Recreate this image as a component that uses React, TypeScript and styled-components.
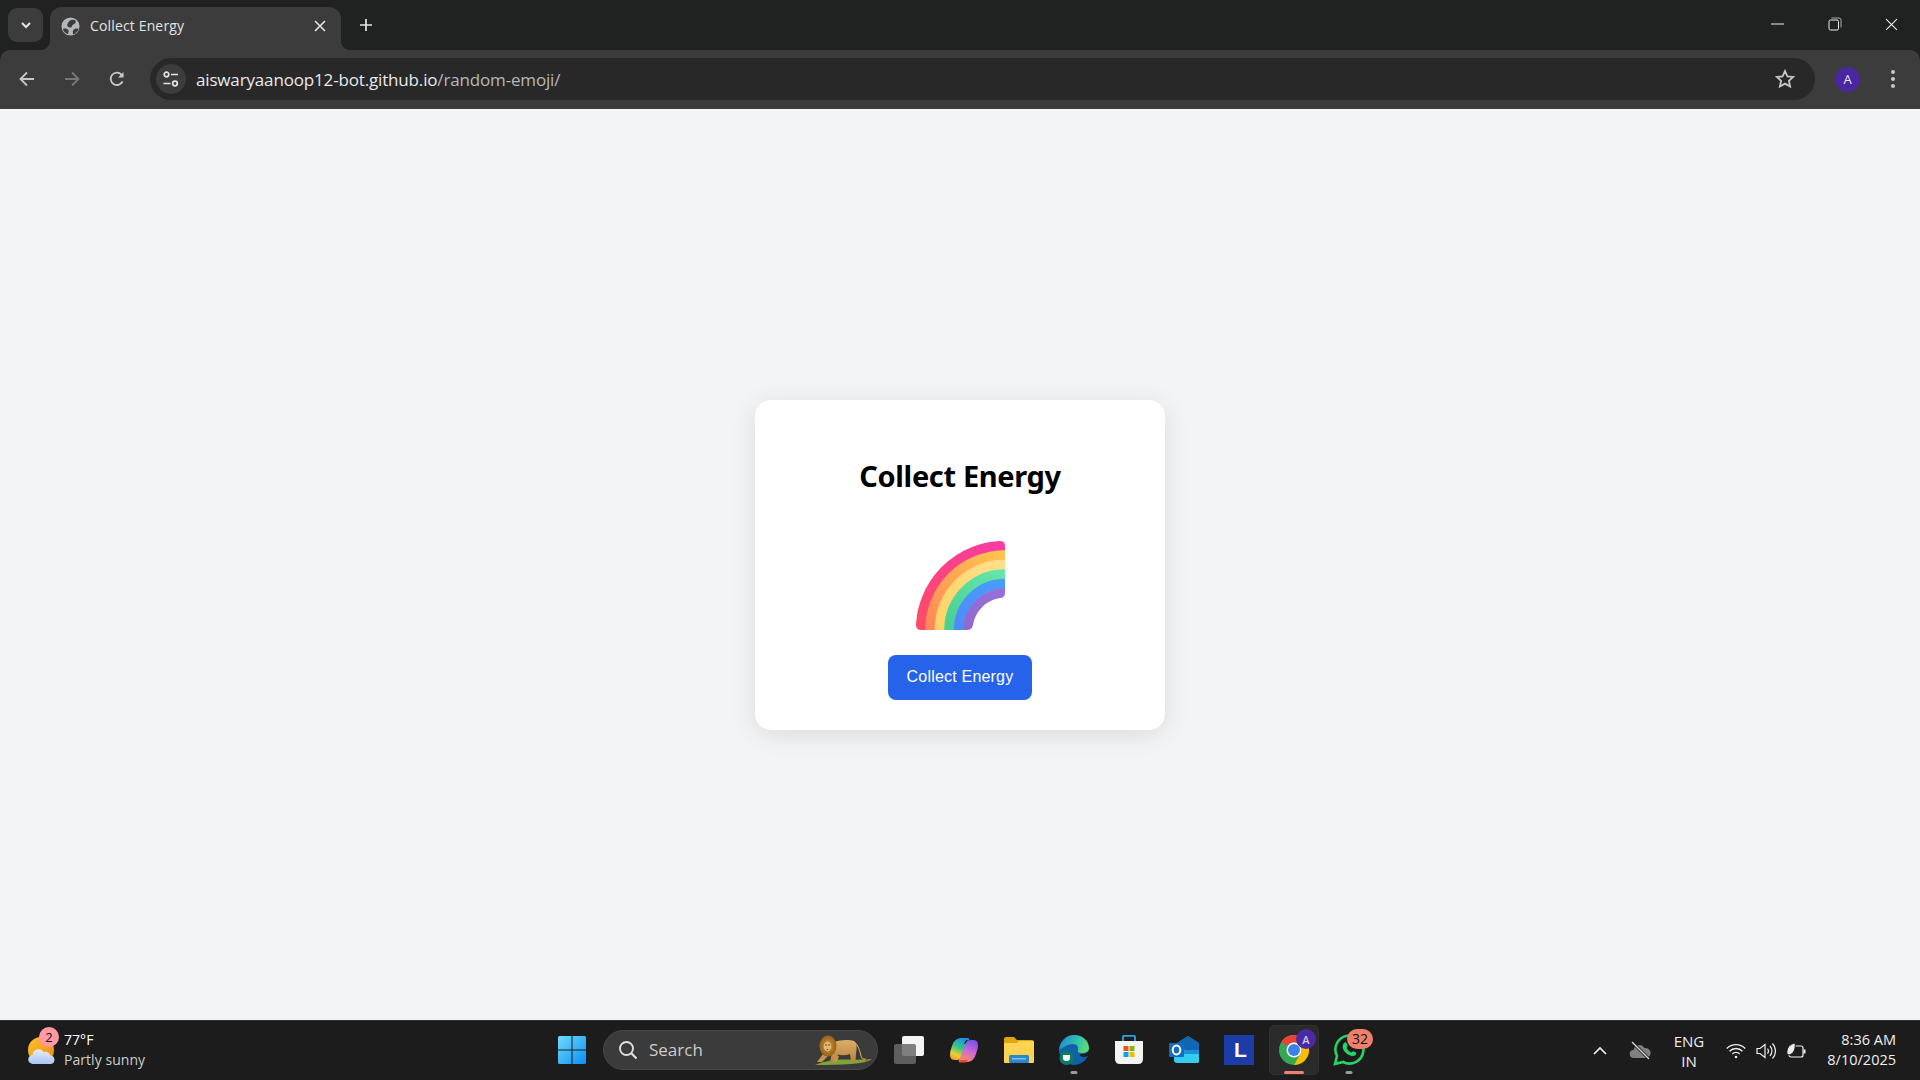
import React from "react";
import styled, { createGlobalStyle } from "styled-components";

const Global = createGlobalStyle`
  html, body { margin: 0; padding: 0; height: 100%; overflow: hidden; }
  #root { height: 100%; }
  * { box-sizing: border-box; }
`;

const UI = `"Open Sans", "Noto Sans", sans-serif`;

const Screen = styled.div`
  width: 1920px; height: 1080px; display: flex; flex-direction: column;
  background: #f3f4f6; font-family: ${UI};
`;
const TabStrip = styled.div`
  height: 50px; flex: none; background: #202221; display: flex; align-items: flex-end; position: relative;
`;
const TabSearch = styled.div`
  width: 35px; height: 34px; margin: 0 7px 8px 8px; border-radius: 9px; background: #3c3c3c;
  display: flex; align-items: center; justify-content: center;
`;
const Tab = styled.div`
  width: 291px; height: 43px; background: #3c3c3c; border-radius: 12px 12px 0 0;
  display: flex; align-items: center; padding: 0 0 5px 11px; color: #e3e3e3; font-size: 14px;
  position: relative;
  &::before, &::after { content: ""; position: absolute; bottom: 0; width: 10px; height: 10px; }
  &::before { left: -10px; background: radial-gradient(circle at 0 0, #202221 10px, #3c3c3c 10.5px); }
  &::after { right: -10px; background: radial-gradient(circle at 100% 0, #202221 10px, #3c3c3c 10.5px); }
`;
const TabTitle = styled.span`
  margin-left: 10px; flex: 1; letter-spacing: 0.15px; padding-bottom: 2px;
`;
const TabClose = styled.div`
  width: 20px; height: 20px; margin-right: 11px; display: flex; align-items: center; justify-content: center;
`;
const NewTab = styled.div`
  width: 20px; height: 20px; margin: 0 0 15px 15px; display: flex; align-items: center; justify-content: center;
`;
const WindowControls = styled.div`
  margin-left: auto; height: 50px; display: flex; align-items: center; padding: 0 22px 2px 0; gap: 43px;
`;
const Toolbar = styled.div`
  height: 59px; flex: none; background: #3c3c3c; display: flex; align-items: flex-start; padding-top: 8px;
  border-radius: 10px 10px 0 0;
`;
const ToolbarWrap = styled.div`
  background: #202221; flex: none;
`;
const NavIcons = styled.div`
  width: 150px; height: 42px; flex: none; display: flex; align-items: center; padding-left: 18px; gap: 27px;
`;
const Omnibox = styled.div`
  width: 1665px; height: 42px; flex: none; border-radius: 21px; background: #282828; display: flex; align-items: center;
  padding: 0 20px 0 6px;
`;
const SiteChip = styled.div`
  width: 30px; height: 30px; border-radius: 50%; background: #3c3c3c; display: flex; align-items: center; justify-content: center; flex: none;
`;
const Url = styled.div`
  margin-left: 10px; flex: 1; font-size: 17px; color: #e8eaed; letter-spacing: -0.16px; padding-top: 1px;
`;
const UrlDim = styled.span` color: #b6b8bb; `;
const ToolbarEnd = styled.div`
  flex: 1; height: 42px; display: flex; align-items: center; padding-left: 20px; gap: 30px;
`;
const Avatar = styled.div`
  width: 25px; height: 25px; border-radius: 50%; background: #4a26a0; color: #e8e2f8; font-size: 13px; display: flex; align-items: center; justify-content: center;
`;

const Page = styled.main`
  flex: 1; display: flex; align-items: center; justify-content: center; background: #f3f4f6; padding-top: 1px;
`;
const Card = styled.section`
  width: 410px; height: 330px; background: #fff; border-radius: 16px;
  box-shadow: 0 5px 26px rgba(0,0,0,.1);
  display: flex; flex-direction: column; align-items: center; padding-top: 56px;
`;
const Title = styled.h1`
  margin: 0; font-family: "Noto Sans", sans-serif; font-weight: 700; font-size: 29px; line-height: 40px; color: #000; letter-spacing: -0.35px;
`;
const EmojiBox = styled.div`
  margin-top: 45px; width: 89px; height: 89px;
`;
const Action = styled.button`
  margin-top: 25px; width: 144px; height: 45px; border: 0; border-radius: 8px; background: #2563eb; color: #fff;
  font-family: "Liberation Sans", Arial, sans-serif; font-size: 16px; letter-spacing: 0.2px; padding: 0 0 2px;
`;

const Taskbar = styled.footer`
  height: 60px; flex: none; background: #1c1c1c; border-top: 1px solid #333; display: flex; align-items: center;
`;
const Weather = styled.div`
  width: 547px; flex: none; height: 100%; display: flex; align-items: center; padding-left: 27px; position: relative;
`;
const WeatherIconWrap = styled.div`
  width: 30px; height: 30px; position: relative; flex: none; margin-top: 3px;
`;
const CountBadge = styled.div<{ $bg: string; $w: number }>`
  position: absolute; height: 20px; width: ${p => p.$w}px; border-radius: 10px; background: ${p => p.$bg}; color: #111;
  font-size: 13px; display: flex; align-items: center; justify-content: center; line-height: 1;
`;
const WeatherBadge = styled(CountBadge)` left: 12px; top: -10px; `;
const WeatherText = styled.div`
  margin-left: 7px; display: flex; flex-direction: column; font-size: 14px; line-height: 20px; margin-top: -2px; letter-spacing: 0.05px;
`;
const Temp = styled.span` color: #fff; `;
const Cond = styled.span` color: #ccc; `;
const Slots = styled.div`
  display: flex; gap: 6px; align-items: center; margin-top: -1px;
`;
const SlotRow = styled.div`
  display: flex; gap: 5px; align-items: center;
`;
const Slot = styled.div<{ $active?: boolean }>`
  width: 50px; height: 50px; border-radius: 5px; display: flex; align-items: center; justify-content: center; position: relative;
  background: ${p => (p.$active ? "#2a2a2a" : "transparent")};
  border: 1px solid ${p => (p.$active ? "#303030" : "transparent")};
`;
const RunDot = styled.div<{ $active?: boolean }>`
  position: absolute; bottom: 0; left: 50%; transform: translateX(-50%); height: 3px; border-radius: 2px;
  width: ${p => (p.$active ? 20 : 7)}px; background: ${p => (p.$active ? "#f08070" : "#9a9a9a")};
`;
const SearchPill = styled.div`
  width: 275px; height: 40px; border-radius: 20px; background: #3b3b3b; border: 1px solid #474747; display: flex; align-items: center;
  padding-left: 14px; position: relative; color: #ccc; font-size: 17px;
`;
const SearchLabel = styled.span` margin-left: 11px; padding-bottom: 1px; `;
const Lion = styled.div` position: absolute; right: 4px; top: 3px; width: 58px; height: 32px; `;
const ChatBadge = styled(CountBadge)` right: 0; top: 3px; font-size: 14px; `;
const Tray = styled.div`
  margin-left: auto; height: 100%; display: flex; align-items: center; padding-right: 24px;
`;
const TrayIcon = styled.div<{ $w: number; $ml: number }>`
  width: ${p => p.$w}px; margin-left: ${p => p.$ml}px; height: 24px; display: flex; align-items: center; justify-content: center; flex: none;
`;
const Lang = styled.div`
  margin-left: 18px; width: 40px; text-align: center; color: #eee; font-size: 15px; line-height: 20px;
`;
const Clock = styled.div`
  margin-left: 14px; margin-top: -2px; text-align: right; color: #eee; font-size: 14.5px; line-height: 20px; width: 76px; white-space: nowrap;
`;

const Chevron = () => (<svg width="14" height="14" viewBox="0 0 14 14"><path d="M3 5l4 4 4-4" fill="none" stroke="#e3e3e3" strokeWidth="2"/></svg>);
const Globe = () => (
  <svg width="19" height="19" viewBox="0 0 20 20"><circle cx="10" cy="10" r="9.5" fill="#b5b8bb"/><path d="M9 4c2-1.500 5-1.500 6.500 0 .5 2-1 3.500-2.500 4-1.500.5-1 2.500-2.500 3-2 .5-4-.5-4-2.500C6.500 7 8 5.500 9 4z" fill="#3c3c3c"/><path d="M2 12.500c2-.8 4-.3 5.500 1 1 1 .5 3-.5 4.500-2.500-1-4.300-3-5-5.500zM13.500 13c1.500-.8 3.500-1 5-.5-.8 2.500-2.800 4.800-5.500 6-.8-1.500-.8-4 .5-5.500z" fill="#3c3c3c"/></svg>
);
const Cross = ({ s = 12, w = 1.6, c = "#e3e3e3" }: { s?: number; w?: number; c?: string }) => (<svg width={s} height={s} viewBox="0 0 12 12"><path d="M1 1l10 10M11 1L1 11" stroke={c} strokeWidth={w} fill="none"/></svg>);
const Plus = () => (<svg width="14" height="14" viewBox="0 0 14 14"><path d="M7 1v12M1 7h12" stroke="#e3e3e3" strokeWidth="1.700"/></svg>);
const Minimize = () => (<svg width="14" height="14" viewBox="0 0 14 14"><path d="M0 7h13" stroke="#eee" strokeWidth="1"/></svg>);
const Restore = () => (<svg width="14" height="14" viewBox="0 0 14 14"><rect x="1" y="3" width="9.500" height="10" rx="1.500" fill="none" stroke="#eee"/><path d="M3.500 1h7.500a2 2 0 0 1 2 2v7.500" fill="none" stroke="#aaa"/></svg>);
const Arrow = ({ flip, c }: { flip?: boolean; c: string }) => (<svg width="18" height="18" viewBox="0 0 18 18" style={flip ? { transform: "scaleX(-1)" } : undefined}><path d="M16 9H3M9 2.500 2.500 9 9 15.500" fill="none" stroke={c} strokeWidth="1.800"/></svg>);
const Reload = () => (<svg width="18" height="18" viewBox="0 0 18 18"><path d="M14.500 11.500A6.200 6.200 0 1 1 13.500 4.600L15 6.200" fill="none" stroke="#c7c7c7" strokeWidth="1.800"/><path d="M15.500 2v5.500H10z" fill="#c7c7c7"/></svg>);
const Tune = () => (<svg width="18" height="18" viewBox="0 0 18 18" fill="none" stroke="#e3e3e3" strokeWidth="1.700"><circle cx="4.500" cy="4.500" r="2.300"/><path d="M9 4.500h7M1.500 13.500h7"/><circle cx="13" cy="13.500" r="2.300"/></svg>);
const Star = () => (<svg width="20" height="20" viewBox="0 0 20 20"><path d="M10 2l2.400 5.300 5.800.6-4.300 3.900 1.200 5.700L10 14.600 4.900 17.500l1.200-5.700L1.800 7.900l5.800-.6z" fill="none" stroke="#c7c7c7" strokeWidth="1.800"/></svg>);
const Kebab = () => (<svg width="6" height="20" viewBox="0 0 6 20" fill="#c7c7c7"><circle cx="3" cy="3" r="2"/><circle cx="3" cy="10" r="2"/><circle cx="3" cy="17" r="2"/></svg>);

const Rainbow = () => {
  const bands: [number, string, string][] = [
    [84.3, "#ff4a68", "#f73d9f"],
    [74.8, "#ff8a58", "#ffc450"],
    [65.3, "#ffd264", "#ffe08a"],
    [55.8, "#46cc90", "#68e9ae"],
    [46.3, "#5086fb", "#46a2fa"],
    [36.8, "#8a68c8", "#9b72e2"],
  ];
  return (
    <svg width="89" height="89" viewBox="0 0 89 89">
      <defs>
        <clipPath id="rb"><path d="M5 89Q0 89 0 84A84 84 0 0 1 84 0Q89 0 89 5V52Q89 56.500 84.500 57A32 32 0 0 0 57 84Q56 89 51 89Z"/></clipPath>
        {bands.map((b, i) => (
          <linearGradient key={i} id={`rg${i}`} gradientUnits="userSpaceOnUse" x1="10" y1="80" x2="80" y2="10">
            <stop offset="0" stopColor={b[1]}/><stop offset="1" stopColor={b[2]}/>
          </linearGradient>
        ))}
      </defs>
      <g clipPath="url(#rb)" fill="none" strokeWidth="10">
        {bands.map((b, i) => (
          <path key={i} d={`M${89 - b[0]} 95V89A${b[0]} ${b[0]} 0 0 1 89 ${89 - b[0]}H95`} stroke={`url(#rg${i})`}/>
        ))}
      </g>
    </svg>
  );
};

const WeatherIcon = () => (
  <svg width="30" height="30" viewBox="0 0 30 30">
    <defs>
      <linearGradient id="sun" x1="0" y1="0" x2="1" y2="1"><stop offset="0" stopColor="#fcc32c"/><stop offset="1" stopColor="#ef8a10"/></linearGradient>
      <linearGradient id="cl" x1="0" y1="0" x2="0" y2="1"><stop offset="0" stopColor="#e6eefc"/><stop offset="1" stopColor="#a9c5f2"/></linearGradient>
    </defs>
    <circle cx="14" cy="13" r="13" fill="url(#sun)"/>
    <path d="M6 27a4.500 4.500 0 0 1-.5-9 6 6 0 0 1 11-3 6 6 0 0 1 7 3.500A4.300 4.300 0 0 1 24 27z" fill="url(#cl)"/>
  </svg>
);
const WinLogo = () => (
  <svg width="30" height="30" viewBox="0 0 30 30">
    <defs><linearGradient id="win" x1="0" y1="0" x2="1" y2="1"><stop offset="0" stopColor="#6fdcff"/><stop offset="1" stopColor="#0a8ef0"/></linearGradient></defs>
    <path d="M1 2.500Q1 1 2.500 1H14.500V14.500H1zM15.500 1H27.500Q29 1 29 2.500V14.500H15.500zM1 15.500H14.500V29H2.500Q1 29 1 27.500zM15.500 15.500H29V27.500Q29 29 27.500 29H15.500z" fill="url(#win)"/>
  </svg>
);
const SearchGlyph = () => (<svg width="20" height="20" viewBox="0 0 20 20"><circle cx="8.500" cy="8.500" r="6.500" fill="none" stroke="#ddd" strokeWidth="1.900"/><path d="M13.300 13.300L18.500 18.500" stroke="#ddd" strokeWidth="2.200"/></svg>);
const LionArt = () => (
  <svg width="58" height="32" viewBox="0 0 58 32">
    <defs>
      <linearGradient id="lb" x1="0" y1="0" x2="0" y2="1"><stop offset="0" stopColor="#dcae68"/><stop offset="1" stopColor="#b8843e"/></linearGradient>
      <radialGradient id="lm"><stop offset="0" stopColor="#d99a3a"/><stop offset="1" stopColor="#95601a"/></radialGradient>
    </defs>
    <path d="M0 31Q14 25 30 25.500T57 25Q52 29 36 30T0 31z" fill="#7fa436"/>
    <path d="M40 9c3 2 5 8 6 13 .6 3 3 3.500 5 3" fill="none" stroke="#c89a55" strokeWidth="1.200"/>
    <path d="M51 23.500l2 2.500-2.500.8z" fill="#7a4c1a"/>
    <path d="M16 9c7-3 17-4 23-2 3 1 3 8 2 12l-.5 9H36l-1-8c-4 1.500-9 1.500-12 .500l-4 7.500h-4l2-9z" fill="url(#lb)"/>
    <path d="M8 20l-6 8h5l6-6zM20 21l-2 7h4l2-6z" fill="#c4924a"/>
    <ellipse cx="13" cy="12" rx="8.500" ry="10.500" fill="url(#lm)"/>
    <ellipse cx="12.500" cy="12.500" rx="3.800" ry="5" fill="#e2b878"/>
    <circle cx="11" cy="11" r=".7" fill="#3a2208"/><circle cx="14" cy="11" r=".7" fill="#3a2208"/>
    <path d="M11.500 15h2l-1 1.300z" fill="#5a3010"/>
  </svg>
);
const TaskView = () => (
  <svg width="32" height="30" viewBox="0 0 32 30"><rect x="9" y="1" width="22" height="20" rx="2" fill="#f4f4f4"/><rect x="1" y="9" width="22" height="20" rx="2" fill="#6a6a6a" fillOpacity=".85"/></svg>
);
const Copilot = () => (
  <svg width="30" height="30" viewBox="0 0 30 30">
    <defs>
      <linearGradient id="cp1" x1=".7" y1="0" x2=".3" y2="1"><stop offset="0" stopColor="#1e8fe8"/><stop offset=".45" stopColor="#36c48a"/><stop offset=".8" stopColor="#f0d030"/><stop offset="1" stopColor="#f4a030"/></linearGradient>
      <linearGradient id="cp2" x1=".7" y1="0" x2=".3" y2="1"><stop offset="0" stopColor="#7a50e8"/><stop offset=".5" stopColor="#d068d8"/><stop offset="1" stopColor="#f88a60"/></linearGradient>
    </defs>
    <path d="M6 25Q1 25 1 20 1 16 3 11 5 4 11 3H18Q21 3 20 5L13 21Q11 25 8 25z" fill="url(#cp1)"/>
    <path d="M24 5Q29 5 29 10 29 14 27 19 25 26 19 27H12Q9 27 10 25L17 9Q19 5 22 5z" fill="url(#cp2)"/>
    <path d="M11 25h8l-2 2.500h-7z" fill="#e84a30"/>
    <path d="M16 9l3-4h-2l-2 4z" fill="#10243c"/>
  </svg>
);
const Folder = () => (
  <svg width="30" height="28" viewBox="0 0 30 28">
    <path d="M0 3Q0 1 2 1H10L13 4H28Q30 4 30 6V12H0z" fill="#e0a50f"/>
    <path d="M0 8Q0 7 1 7H13L15 5H29Q30 5 30 6V26Q30 27 29 27H1Q0 27 0 26z" fill="#fcd452"/>
    <rect x="5" y="19" width="20" height="8" rx="1.500" fill="#2a86c8"/><rect x="8" y="22" width="14" height="1.500" fill="#7fc4ee"/>
  </svg>
);
const Edge = () => (
  <svg width="30" height="30" viewBox="0 0 30 30">
    <defs><linearGradient id="ed" x1="0" y1=".3" x2="1" y2=".6"><stop offset="0" stopColor="#1f86d4"/><stop offset=".55" stopColor="#30c0b0"/><stop offset="1" stopColor="#62dc70"/></linearGradient></defs>
    <circle cx="15" cy="15" r="15" fill="#0f62a8"/>
    <path d="M0 15C1 6 8 0 15 0c9 0 15 6 15 13 0 3-3 5-7 5-3 0-5-1-4-3 1-3-1-6-5-6-5 0-9 3-14 6z" fill="url(#ed)"/>
    <path d="M30 15.500c-1 2.500-4 3.500-7 3.500-2 0-3 1-1.500 2 3 2 6 1 8.500-1z" fill="#1c1c1c"/>
    <circle cx="7.500" cy="23" r="7" fill="#0d7a64"/>
    <path d="M4 20h7v3a3 3 0 0 1-3 3H7a3 3 0 0 1-3-3z" fill="#f3f3f3"/>
  </svg>
);
const Store = () => (
  <svg width="30" height="30" viewBox="0 0 30 30">
    <path d="M9 7V2Q9 .8 10 .8H20Q21 .8 21 2V7" fill="none" stroke="#2aa4e8" strokeWidth="1.800"/>
    <path d="M1 6H29V24Q29 29 24 29H6Q1 29 1 24z" fill="#f4f4f4"/>
    <rect x="9.500" y="11" width="5" height="5" fill="#f25022"/><rect x="15.500" y="11" width="5" height="5" fill="#7fba00"/>
    <rect x="9.500" y="17" width="5" height="5" fill="#00a4ef"/><rect x="15.500" y="17" width="5" height="5" fill="#ffb900"/>
  </svg>
);
const Outlook = () => (
  <svg width="30" height="28" viewBox="0 0 30 28">
    <path d="M5 9L19 0 30 7V25Q30 27 28 27H9Q5 27 5 24z" fill="#1c8fd8"/>
    <path d="M19 0L30 7V14L17 14 5 9z" fill="#1066b0"/>
    <path d="M5 18H30V25Q30 27 28 27H9Q5 27 5 24z" fill="#34cdf0"/>
    <rect x="0" y="7" width="15" height="14" rx="1" fill="#0f6cc0"/>
    <ellipse cx="7.500" cy="14" rx="3.800" ry="4.500" fill="none" stroke="#fff" strokeWidth="2"/>
  </svg>
);
const LBox = styled.div`
  width: 30px; height: 30px; background: #1c3ca8; color: #fff; font: 700 21px "Liberation Sans", Arial, sans-serif; display: flex; align-items: center; justify-content: center; padding-left: 3px;
`;
const ChromeLogo = () => (
  <svg width="30" height="30" viewBox="0 0 30 30">
    <circle cx="15" cy="15" r="15" fill="#34a853"/>
    <path d="M15 0a15 15 0 0 1 13 7.500H15a7.500 7.500 0 0 0-6.500 3.700L2.300 6.700A15 15 0 0 1 15 0z" fill="#ea4335"/>
    <path d="M28 7.500A15 15 0 0 1 15 30l6.500-11.200A7.500 7.500 0 0 0 21.500 11z" fill="#fbbc04"/>
    <circle cx="15" cy="15" r="7.500" fill="#fff"/><circle cx="15" cy="15" r="6" fill="#3b82e8"/>
  </svg>
);
const ProfileBadge = styled.div`
  position: absolute; left: 26px; top: 3px; width: 20px; height: 20px; border-radius: 50%; background: #4a2aa0; color: #cfc6ee; font-size: 11px; font-weight: 600; display: flex; align-items: center; justify-content: center;
`;
const WhatsApp = () => (
  <svg width="32" height="32" viewBox="0 0 32 32">
    <path d="M2 30l2-8A14 14 0 1 1 10 28z" fill="#1c1c1c" stroke="#25d366" strokeWidth="2.600"/>
    <path d="M11 9c1-1 2-1 2.500 0l1.200 2.600c.2.600-1 1.800-1 2.400.8 2 2.600 3.600 4.600 4.400.6 0 1.600-1.400 2.200-1.200l2.500 1.400c.8.600 0 2.400-1 3-3 1.400-7-.6-9.500-3.200C10 16.500 8.500 12 11 9z" fill="#25d366"/>
  </svg>
);
const Caret = () => (<svg width="16" height="10" viewBox="0 0 16 10"><path d="M2 8l6-6 6 6" fill="none" stroke="#eee" strokeWidth="1.700"/></svg>);
const CloudOff = () => (
  <svg width="22" height="20" viewBox="0 0 22 20"><path d="M5 17a4 4 0 0 1-.5-8 6 6 0 0 1 11-2 5 5 0 0 1 2 10z" fill="#808080"/><path d="M3 1l17 17" stroke="#1c1c1c" strokeWidth="3"/><path d="M3 1l17 17" stroke="#ddd" strokeWidth="1.300"/></svg>
);
const Wifi = () => (
  <svg width="20" height="16" viewBox="0 0 20 16" fill="none" stroke="#eee" strokeWidth="1.300"><path d="M.8 5.500a13 13 0 0 1 18.400 0M3.500 8.300a9 9 0 0 1 13 0M6.300 11a5 5 0 0 1 7.400 0"/><circle cx="10" cy="14" r="1.300" fill="#eee" stroke="none"/></svg>
);
const Volume = () => (
  <svg width="20" height="18" viewBox="0 0 20 18" fill="none" stroke="#eee" strokeWidth="1.200"><path d="M1 6.500h3L9 2.500v13L4 11.500H1z"/><path d="M11.500 6.500a4 4 0 0 1 0 5M14 4a7.500 7.500 0 0 1 0 10M16.500 1.500a11 11 0 0 1 0 15"/></svg>
);
const Battery = () => (
  <svg width="20" height="18" viewBox="0 0 20 18"><rect x="3" y="4" width="14" height="11" rx="2" fill="none" stroke="#eee" strokeWidth="1.200"/><rect x="17.500" y="7.500" width="2" height="4" fill="#eee"/><path d="M1 12C0 6 4 2 9 1c1 5-1 11-6 12z" fill="#eee" stroke="#1c1c1c"/></svg>
);

export default function App() {
  return (
    <Screen>
      <Global />
      <TabStrip>
        <TabSearch><Chevron /></TabSearch>
        <Tab>
          <Globe />
          <TabTitle>Collect Energy</TabTitle>
          <TabClose><Cross /></TabClose>
        </Tab>
        <NewTab><Plus /></NewTab>
        <WindowControls>
          <Minimize /><Restore /><Cross s={13} w={1} c="#eee" />
        </WindowControls>
      </TabStrip>
      <ToolbarWrap>
        <Toolbar>
          <NavIcons>
            <Arrow c="#c7c7c7" /><Arrow flip c="#777" /><Reload />
          </NavIcons>
          <Omnibox>
            <SiteChip><Tune /></SiteChip>
            <Url>aiswaryaanoop12-bot.github.io<UrlDim>/random-emoji/</UrlDim></Url>
            <Star />
          </Omnibox>
          <ToolbarEnd>
            <Avatar>A</Avatar>
            <Kebab />
          </ToolbarEnd>
        </Toolbar>
      </ToolbarWrap>
      <Page>
        <Card>
          <Title>Collect Energy</Title>
          <EmojiBox><Rainbow /></EmojiBox>
          <Action>Collect Energy</Action>
        </Card>
      </Page>
      <Taskbar>
        <Weather>
          <WeatherIconWrap>
            <WeatherIcon />
            <WeatherBadge $bg="#ff99a4" $w={20}>2</WeatherBadge>
          </WeatherIconWrap>
          <WeatherText><Temp>77°F</Temp><Cond>Partly sunny</Cond></WeatherText>
        </Weather>
        <Slots>
          <Slot><WinLogo /></Slot>
          <SearchPill>
            <SearchGlyph />
            <SearchLabel>Search</SearchLabel>
            <Lion><LionArt /></Lion>
          </SearchPill>
          <SlotRow>
            <Slot><TaskView /></Slot>
            <Slot><Copilot /></Slot>
            <Slot><Folder /></Slot>
            <Slot><Edge /><RunDot /></Slot>
            <Slot><Store /></Slot>
            <Slot><Outlook /></Slot>
            <Slot><LBox>L</LBox></Slot>
            <Slot $active><ChromeLogo /><ProfileBadge>A</ProfileBadge><RunDot $active /></Slot>
            <Slot><WhatsApp /><ChatBadge $bg="#f0806a" $w={26}>32</ChatBadge><RunDot /></Slot>
          </SlotRow>
        </Slots>
        <Tray>
          <TrayIcon $w={20} $ml={0}><Caret /></TrayIcon>
          <TrayIcon $w={22} $ml={19}><CloudOff /></TrayIcon>
          <Lang>ENG<br />IN</Lang>
          <TrayIcon $w={20} $ml={17}><Wifi /></TrayIcon>
          <TrayIcon $w={20} $ml={10}><Volume /></TrayIcon>
          <TrayIcon $w={20} $ml={10}><Battery /></TrayIcon>
          <Clock>8:36 AM<br />8/10/2025</Clock>
        </Tray>
      </Taskbar>
    </Screen>
  );
}
